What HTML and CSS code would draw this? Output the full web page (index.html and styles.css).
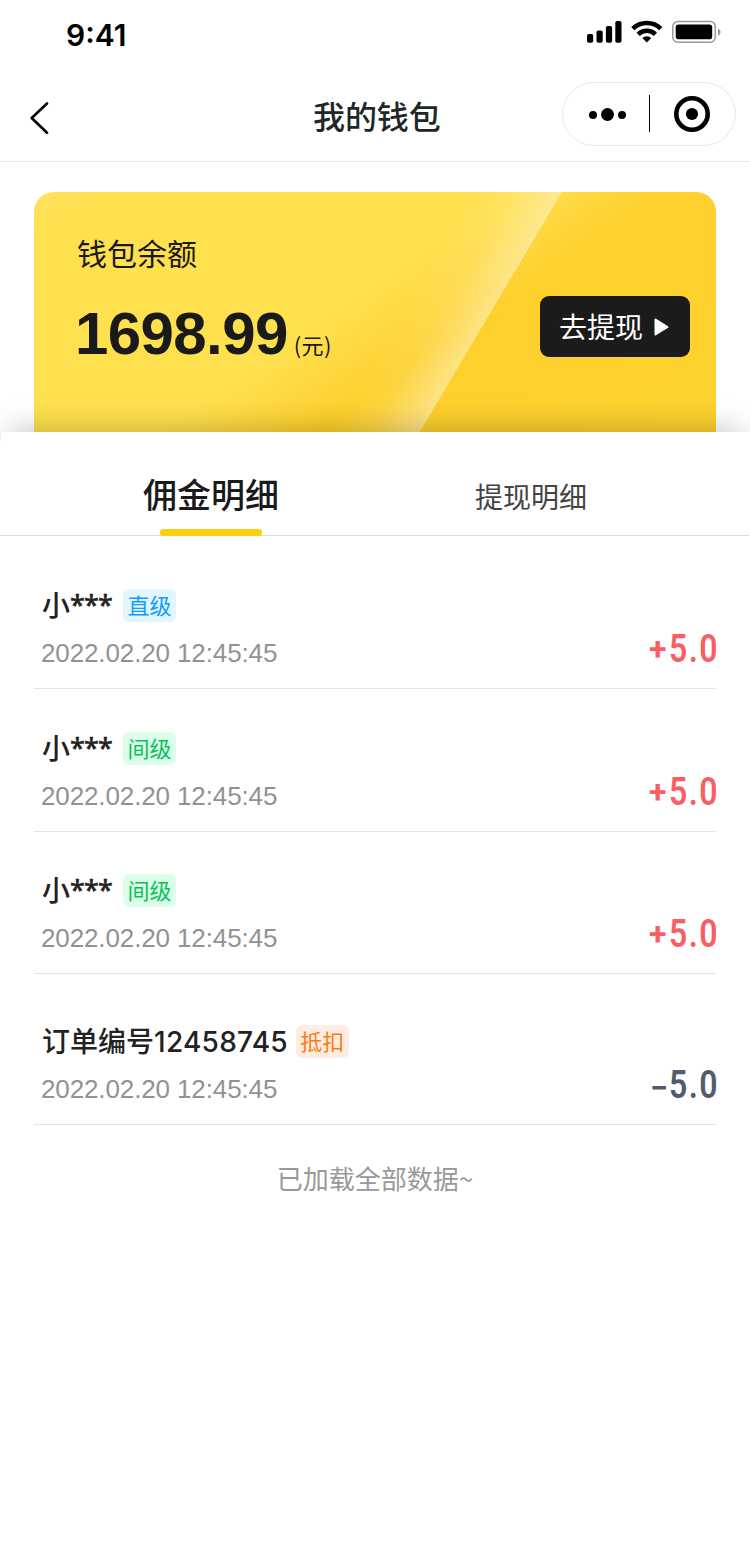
FILE: index.html
```html
<!DOCTYPE html>
<html lang="zh-CN">
<head>
<meta charset="utf-8">
<title>我的钱包</title>
<link rel="stylesheet" href="styles.css">
</head>
<body>
<div class="page">
  <header class="header">
    <div class="status">
      <span class="time">9:41</span>
      <svg class="status-icons" width="136" height="24" viewBox="0 0 136 24">
        <rect x="1" y="14" width="6.200" height="8.700" rx="1.800"/>
        <rect x="10.500" y="10.500" width="6.200" height="12.200" rx="1.800"/>
        <rect x="19.900" y="6" width="6.200" height="16.700" rx="1.800"/>
        <rect x="29.300" y="1" width="6.200" height="21.700" rx="1.800"/>
        <g fill="none" stroke="#000" stroke-width="4.600">
          <path d="M46.800 8.700a20 20 0 0 1 28 0"/>
          <path d="M52.200 14.300a12.300 12.300 0 0 1 17.200 0"/>
        </g>
        <path d="M60.800 22.600l-4.500-4.500a6.500 6.500 0 0 1 9 0z"/>
        <rect x="86.800" y="1.600" width="42.400" height="20.600" rx="5" fill="none" stroke="#999" stroke-width="1.500"/>
        <rect x="89.700" y="4.500" width="36.500" height="14.700" rx="2.800"/>
        <path d="M132 8.500c3.400 1.400 3.400 5.800 0 7.200z" fill="#999"/>
      </svg>
    </div>
    <div class="nav">
      <svg class="back" width="20" height="34" viewBox="0 0 20 34"><path d="M17 2.500L1.700 17 17 31.800" fill="none" stroke="#000" stroke-width="2.600" stroke-linecap="round" stroke-linejoin="round"/></svg>
      <h1 class="title">我的钱包</h1>
      <div class="capsule">
        <svg width="38" height="14" viewBox="0 0 38 14"><circle cx="4" cy="8" r="4"/><circle cx="18.500" cy="7.500" r="6.500"/><circle cx="33" cy="8" r="4"/></svg>
        <span class="capsule-line"></span>
        <svg width="36" height="36" viewBox="0 0 36 36"><circle cx="18" cy="18" r="15.700" fill="none" stroke="#000" stroke-width="4.600"/><circle cx="18" cy="18" r="6.100"/></svg>
      </div>
    </div>
  </header>
  <section class="card">
    <div class="balance">
      <div class="label">钱包余额</div>
      <div class="value"><span class="number">1698.99</span><span class="unit">(元)</span></div>
    </div>
    <button class="withdraw">去提现<svg width="15" height="18" viewBox="0 0 15 18"><path d="M1.500 1.500L13.500 9 1.500 16.500z" fill="#fff" stroke="#fff" stroke-width="2" stroke-linejoin="round"/></svg></button>
  </section>
  <main class="sheet">
    <nav class="tabs">
      <span class="tab active">佣金明细</span>
      <span class="tab">提现明细</span>
    </nav>
    <ul class="list">
      <li class="row first">
        <div><div class="name"><span>小<span class="mask">***</span></span><span class="tag blue">直级</span></div><div class="date">2022.02.20 12:45:45</div></div>
        <div class="amount"><span class="sign">+</span><span class="figure">5.0</span></div>
      </li>
      <li class="row second">
        <div><div class="name"><span>小<span class="mask">***</span></span><span class="tag green">间级</span></div><div class="date">2022.02.20 12:45:45</div></div>
        <div class="amount"><span class="sign">+</span><span class="figure">5.0</span></div>
      </li>
      <li class="row">
        <div><div class="name"><span>小<span class="mask">***</span></span><span class="tag green">间级</span></div><div class="date">2022.02.20 12:45:45</div></div>
        <div class="amount"><span class="sign">+</span><span class="figure">5.0</span></div>
      </li>
      <li class="row order">
        <div><div class="name"><span>订单编号<span class="digits">12458745</span></span><span class="tag orange">抵扣</span></div><div class="date">2022.02.20 12:45:45</div></div>
        <div class="amount minus"><span class="sign">−</span><span class="figure">5.0</span></div>
      </li>
    </ul>
    <p class="end">已加载全部数据~</p>
  </main>
</div>
</body>
</html>
```
FILE: styles.css
```css
* { box-sizing: border-box; }
body { margin: 0; background: #fff; font-family: "Noto Sans CJK SC", sans-serif; color: #1a1a1a; }
.page { width: 750px; height: 1556px; overflow: hidden; display: flex; flex-direction: column; }
.header { height: 162px; border-bottom: 1px solid #ececec; }
.status { height: 72px; padding: 20px 28px 0 66px; display: flex; justify-content: space-between; align-items: flex-start; }
.time { font: 600 30px/30px Inter, sans-serif; color: #000; }
.status-icons { display: block; }
.nav { height: 89px; padding: 10px 14px 0 30px; display: grid; grid-template-columns: 173px 1fr 174px; align-items: start; }
.back { margin-top: 19px; }
.title { margin: 0; padding: 1px 0 0 110px; font-size: 32px; line-height: 64px; font-weight: 500; letter-spacing: -.1px; color: #1f2829; white-space: nowrap; }
.capsule { height: 64px; border: 1px solid #e8e8e8; border-radius: 32px; display: flex; align-items: center; padding-left: 26px; }
.capsule-line { width: 1px; height: 37px; background: #000; margin: 0 24px 2px 22px; }
.card { flex: none; height: 240px; margin: 30px 34px 0; padding: 40px 26px 0 42px; border-radius: 20px 20px 0 0; display: flex; justify-content: space-between; align-items: flex-start;
  background:
    linear-gradient(120.6deg, transparent 53%, rgba(255,255,255,.1) 58%, rgba(255,255,255,.42) 64%, transparent 64.100%),
    linear-gradient(146deg, #ffe363 0, #ffe04e 7%, #ffe04e 47%, #fed840 54%, #fdd02c 61%, #fdd12f 100%); }
.label { padding-left: 1px; font-size: 30px; line-height: 40px; }
.value { margin-top: 32px; display: flex; align-items: baseline; line-height: 60px; }
.number { font: 700 60px/60px "Liberation Sans", Arial, sans-serif; letter-spacing: -.6px; margin-left: -1px; }
.unit { font-size: 22px; line-height: 30px; margin-left: 6px; letter-spacing: .4px; }
.withdraw { width: 150px; height: 61px; margin: 64px 0 0; padding: 0 0 1px 19px; border: 0; border-radius: 9px; background: #1b1b1b; color: #fff; font: 400 28px/40px "Noto Sans CJK SC", sans-serif; display: flex; align-items: center; }
.withdraw svg { margin-left: 11px; margin-top: 1px; }
.sheet { flex: 1; background: #fff; position: relative; box-shadow: 0 -10px 30px -10px rgba(0,0,0,.27); clip-path: polygon(0 -50px, 100% -50px, 100% 100%, 0 100%); }
.sheet::before { content: ""; position: absolute; left: 0; top: 0; width: 1px; height: 9px; background: #ececec; }
.tabs { height: 104px; border-bottom: 1px solid #dcdcdc; display: flex; margin-right: 1px; }
.tab { width: 320px; margin-left: 51px; text-align: center; font-size: 28px; line-height: 129px; color: #444; white-space: nowrap; }
.tab.active { font-size: 34px; font-weight: 500; line-height: 124px; color: #1a1a1a; position: relative; }
.tab:last-child { margin-left: 0; }
.tab.active::after { content: ""; position: absolute; left: 109px; bottom: -1px; width: 102px; height: 7px; border-radius: 3px; background: #ffcf0f; }
.list { margin: 0; padding: 0; list-style: none; }
.row { height: 142px; padding: 42px 0 0 7px; margin: 0 34px; border-bottom: 1px solid #e4e4e4; display: flex; justify-content: space-between; align-items: flex-start; }
.row.first { height: 153px; padding-top: 53px; }
.row.second { height: 143px; padding-top: 43px; }
.row.order { height: 151px; padding-top: 51px; }
.name { height: 33px; padding-left: 1px; display: flex; align-items: center; font-size: 28px; line-height: 33px; font-weight: 500; color: #222; }
.row:not(.order) .name > span:first-child { margin-top: -2px; }
.mask { display: inline-block; width: 44px; height: 26px; line-height: 26px; font-family: "Noto Sans", sans-serif; font-size: 27px; letter-spacing: -.8px; vertical-align: 1px; -webkit-text-stroke: .4px #222; }
.digits { font-family: Inter, sans-serif; letter-spacing: .25px; }
.tag { width: 53px; height: 33px; margin-left: 8px; padding-bottom: 1px; border-radius: 6px; text-align: center; font-size: 22px; line-height: 31px; font-weight: 400; }
.row:not(.order) .tag { margin-left: 9px; }
.blue { color: #0b9dff; background: #e3f6ff; }
.green { color: #08c15b; background: #dcffea; }
.orange { color: #ff7b0d; background: #ffede4; }
.date { margin-top: 15px; font: 400 26px/32px "Liberation Sans", Arial, sans-serif; letter-spacing: -.12px; color: #929292; white-space: nowrap; }
.amount { width: 67px; margin-top: 40px; display: flex; line-height: 40px; color: #f95e62; font-family: Roboto, sans-serif; }
.sign { width: 20px; font-size: 32px; font-weight: 700; }
.figure { font-size: 39px; font-weight: 600; width: 47px; display: block; transform: scaleX(.82); transform-origin: left; letter-spacing: 1.8px; }
.minus { color: #515c6d; }
.minus .sign { padding-left: 1px; transform: translateY(3px); }
.end { margin: 33px 0 0; text-align: center; font-size: 26px; line-height: 40px; color: #999; }
```
